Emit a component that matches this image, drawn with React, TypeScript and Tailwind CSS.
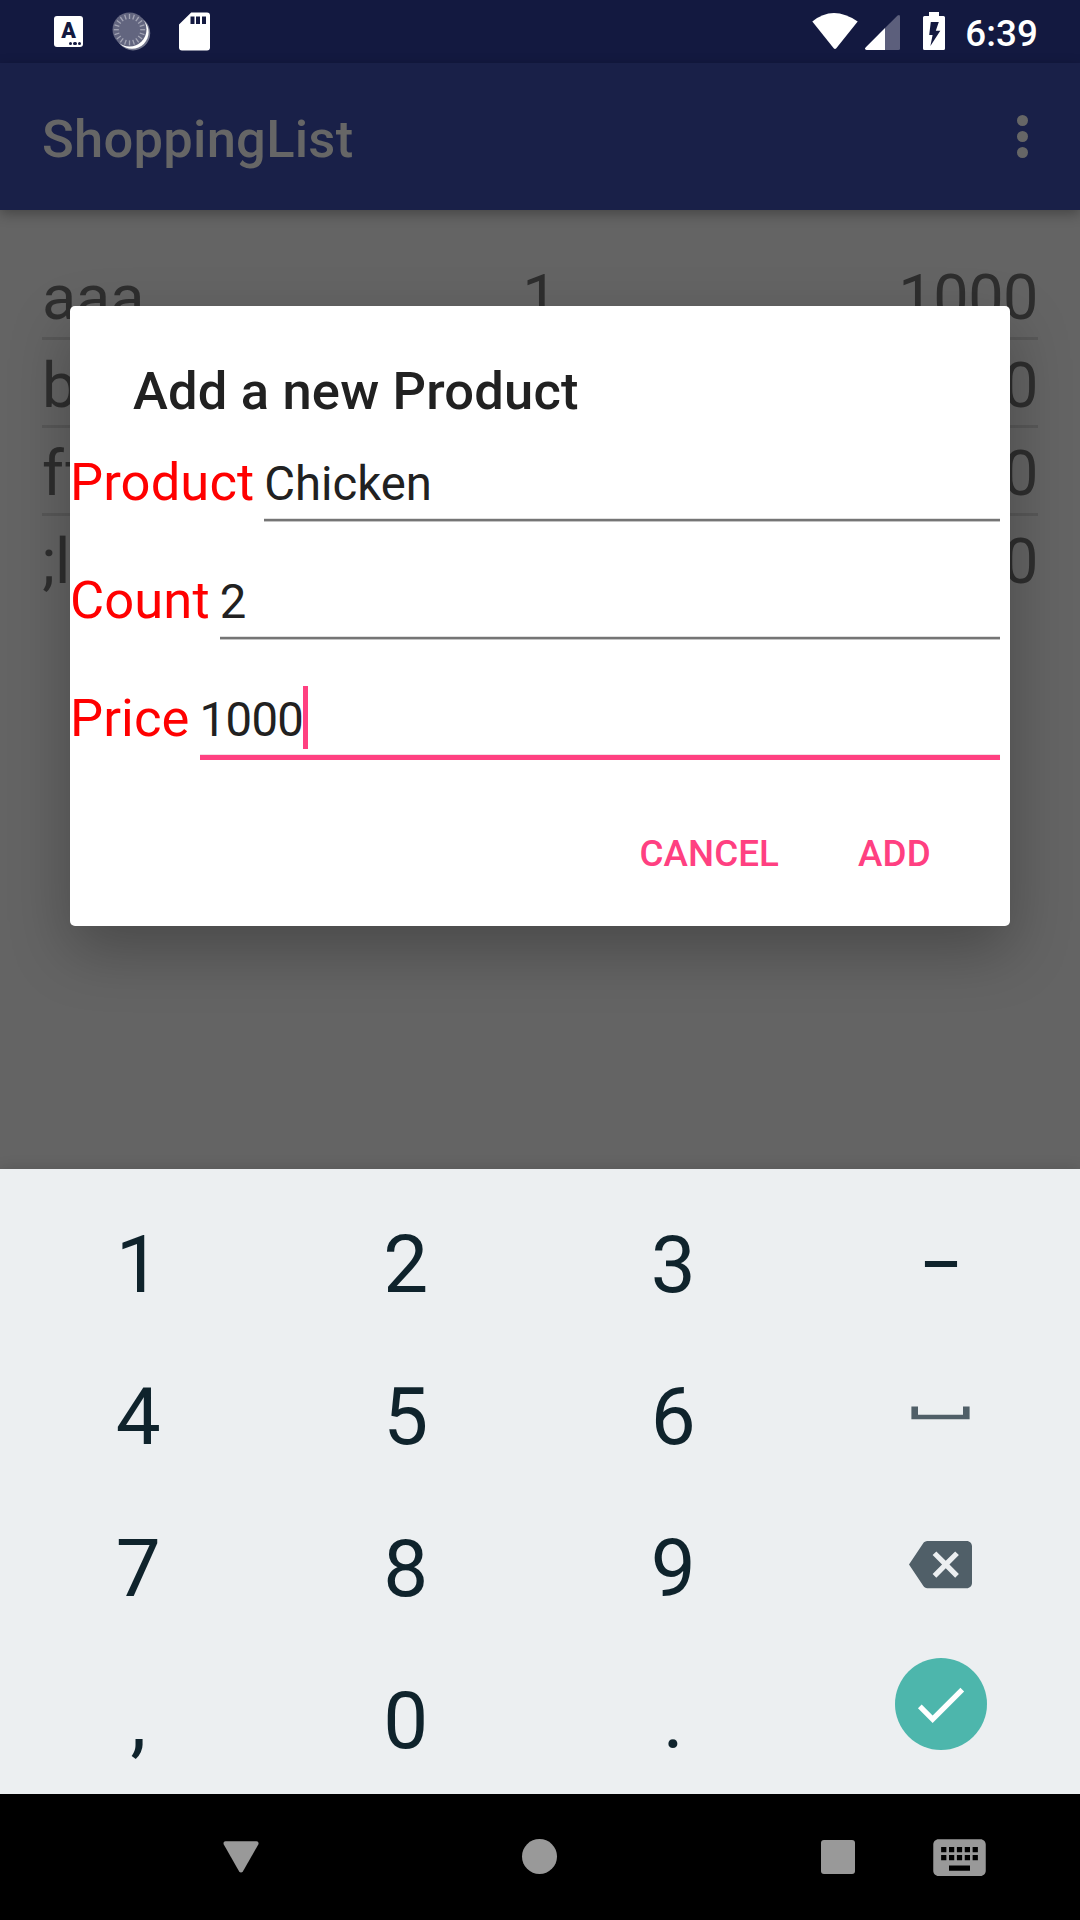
import type { ReactNode } from "react";

const rows = [
  { name: "aaa", count: "1", price: "1000" },
  { name: "b", count: "", price: "0" },
  { name: "ff", count: "", price: "0" },
  { name: ";l", count: "", price: "0" },
];

function StatusBar() {
  const ticks = Array.from({ length: 20 }, (_, i) => i * 18);
  return (
    <div className="flex h-[63px] shrink-0 items-start justify-between bg-[#131940]">
      <div className="flex">
        <div className="relative mt-4 ml-[54px] h-[31px] w-[29px] rounded-[3px] bg-white text-center text-[21.5px] leading-[30px] font-black text-[#131940]">
          A
          <div className="absolute right-[2px] bottom-[2px] flex gap-[1px]">
            <i className="size-[3.4px] rounded-full bg-[#131940]" />
            <i className="size-[3.4px] rounded-full bg-[#131940]" />
            <i className="size-[3.4px] rounded-full bg-[#131940]" />
          </div>
        </div>
        <svg className="mt-[10px] ml-[27px]" width="42" height="42" viewBox="110 10 42 42">
          <circle cx="133" cy="33.2" r="17.2" fill="#fff" opacity=".4" />
          <circle cx="132" cy="32.2" r="16.6" fill="#fff" />
          <circle cx="129.5" cy="29.5" r="17" fill="#62657f" />
          {ticks.map((a) => (
            <path key={a} d="M129.5 14v5" stroke="#a3a5b5" strokeWidth="1.3" transform={`rotate(${a} 129.5 29.7)`} />
          ))}
        </svg>
        <svg className="mt-[12px] ml-[27px]" width="31" height="39" viewBox="0 0 31 39">
          <path
            fill="#fff"
            fillRule="evenodd"
            d="M12.2.5H28a3 3 0 0 1 3 3V35.500a3 3 0 0 1-3 3H3a3 3 0 0 1-3-3V12.500zM11.500 4.500v7.500h4v-7.500zM17 4.500v7.500h4v-7.500zM23 4.500v7.500h4v-7.500z"
          />
        </svg>
      </div>
      <div className="flex text-white">
        <svg className="mt-3" width="46" height="38" viewBox="812 12 46 38">
          <path fill="#fff" d="M812.300 21.500Q833 4.500 857.700 21.500L836.300 48.300Q835 49.800 833.700 48.300z" />
        </svg>
        <svg className="mt-[14px] ml-[7px]" width="35" height="36" viewBox="865 14 35 36">
          <path fill="#5c5f7c" d="M897.600 15.500Q900 14 900 16.500V48.500Q900 50 898.500 50H885V28z" />
          <path fill="#fff" d="M885 28V50H866.500Q864 49.500 865.600 47.500z" />
        </svg>
        <svg className="mt-3 ml-[23px]" width="22" height="38" viewBox="923 12 22 38">
          <path
            fill="#fff"
            fillRule="evenodd"
            d="M929 12h10v4h4.500a1.500 1.500 0 0 1 1.500 1.500v31a1.500 1.500 0 0 1-1.500 1.500h-19a1.500 1.500 0 0 1-1.500-1.500v-31a1.500 1.500 0 0 1 1.500-1.500h4.500zM930.800 22L929.200 35h3.400L930.400 46 940.300 30.700h-4.500L938.800 22z"
          />
        </svg>
        <div className="mt-[12px] mr-[42px] ml-[20px] w-[73px] text-right text-[36.75px] leading-[43px] font-medium tracking-[0.1px]">
          6:39
        </div>
      </div>
    </div>
  );
}

function AppBar() {
  return (
    <div className="relative flex h-[147px] shrink-0 items-center justify-between bg-[#192048] pr-[52px] pl-[42px] shadow-[0_4px_12px_rgba(0,0,0,0.3)]">
      <div className="pt-[5px] text-[52.5px] leading-[62px] font-medium tracking-[0.25px] text-[#666]">ShoppingList</div>
      <div className="flex flex-col gap-[4.800px]">
        <i className="size-[11px] rounded-full bg-[#666]" />
        <i className="size-[11px] rounded-full bg-[#666]" />
        <i className="size-[11px] rounded-full bg-[#666]" />
      </div>
    </div>
  );
}

function ProductList() {
  return (
    <div className="flex-1 px-[42px] pt-[42px] text-[63px] text-[#2e2e2e]">
      {rows.map((r, i) => (
        <div
          key={r.name}
          className={
            i < rows.length - 1
              ? "grid grid-cols-3 border-b-3 border-[#585858] pt-[6px] leading-[79px]"
              : "grid grid-cols-3 pt-[6px] leading-[79px]"
          }
        >
          <span className="tracking-[-0.2px]">{r.name}</span>
          <span className="text-center">{r.count}</span>
          <span className="text-right tracking-[-0.5px]">{r.price}</span>
        </div>
      ))}
    </div>
  );
}

function Field({ label, value, focused }: { label: string; value: string; focused?: boolean }) {
  return (
    <div className="flex h-[118px] pr-[10px]">
      <label className="pt-[10px] text-[52.5px] leading-[62px] tracking-[0.1px] text-[#f00]">{label}</label>
      <div className="relative ml-[10px] h-[82px] flex-1 text-[47.25px] leading-[66px] text-[#212121]">
        <div className="flex">
          <span className={focused ? "pt-[10px] tracking-[-0.6px]" : "pt-[10px]"}>{value}</span>
          {focused && <i className="mt-[9px] h-[63px] w-[5px] bg-[#ff4081]" />}
        </div>
        {focused ? (
          <div className="absolute inset-x-0 top-[77px] h-[6px] border-t border-[#f3dfe5] bg-[#ff4081]" />
        ) : (
          <div className="absolute inset-x-0 top-[77px] h-[4px] border-t border-b border-t-[#e0e0e0] border-b-[#c4c4c4] bg-[#757575]" />
        )}
      </div>
    </div>
  );
}

function AddDialog() {
  return (
    <div className="absolute top-[306px] left-[70px] flex h-[620px] w-[940px] flex-col rounded-[5px] bg-white shadow-[0_24px_60px_rgba(0,0,0,0.27)]">
      <div className="mt-[54px] ml-[63px] text-[52.5px] leading-[62px] font-medium tracking-[0.18px] text-[#212121]">
        Add a new Product
      </div>
      <div className="mt-[19px] flex flex-col">
        <Field label="Product" value="Chicken" />
        <Field label="Count" value="2" />
        <Field label="Price" value="1000" focused />
      </div>
      <div className="flex justify-end gap-[79px] pt-[37px] pr-[79px] text-[36.75px] leading-[43px] font-medium text-[#ff4081]">
        <button className="tracking-[0.1px]">CANCEL</button>
        <button className="tracking-[0.2px]">ADD</button>
      </div>
    </div>
  );
}

function Key({ children }: { children: ReactNode }) {
  return <div className="flex items-center justify-center pt-[6px]">{children}</div>;
}

function IconKey({ children }: { children: ReactNode }) {
  return <div className="flex items-center justify-center pb-[3px]">{children}</div>;
}

function Keyboard() {
  return (
    <div className="relative grid h-[625px] shrink-0 grid-cols-4 grid-rows-4 bg-[#eceff1] pt-[17px] pr-[5.500px] pl-[4.500px] text-[80px] leading-[94px] text-[#0f232c] shadow-[0_0_14px_rgba(0,0,0,0.14)]">
      <Key>1</Key>
      <Key>2</Key>
      <Key>3</Key>
      <Key>
        <span className="scale-x-[0.82]">–</span>
      </Key>
      <Key>4</Key>
      <Key>5</Key>
      <Key>6</Key>
      <IconKey>
        <svg width="59" height="14" viewBox="0 0 59 14">
          <path fill="#505f68" d="M.4.400H7V8.800H52V.400h6.600V13.300H.4z" />
        </svg>
      </IconKey>
      <Key>7</Key>
      <Key>8</Key>
      <Key>9</Key>
      <IconKey>
        <svg width="63" height="63" viewBox="0 0 24 24" fill="#505f68">
          <path d="M22 3H7c-.69 0-1.230.350-1.590.880L0 12l5.410 8.110c.360.530.900.890 1.590.890h15c1.100 0 2-.9 2-2V5c0-1.100-.9-2-2-2zm-3 12.590L17.590 17 14 13.410 10.410 17 9 15.590 12.590 12 9 8.410 10.410 7 14 10.590 17.590 7 19 8.410 15.410 12 19 15.590z" />
        </svg>
      </IconKey>
      <Key>,</Key>
      <Key>0</Key>
      <Key>.</Key>
      <div className="flex justify-center pt-[16px]">
        <div className="flex size-[92px] items-center justify-center rounded-full bg-[#4db6ac] pr-[1px]">
          <svg width="63" height="63" viewBox="0 0 24 24" fill="#fff">
            <path d="M9 16.170L4.830 12l-1.420 1.410L9 19 21 7l-1.410-1.410z" />
          </svg>
        </div>
      </div>
    </div>
  );
}

function NavBar() {
  return (
    <div className="relative flex h-[126px] shrink-0 items-center bg-black">
      <svg className="ml-[223px]" width="36" height="32" viewBox="0 0 36 32">
        <path fill="#999" d="M2.500.3H33.500Q36.300.6 35.300 3.500L20 30.200Q18 32.800 16 30.200L.8 3.500Q-.3.6 2.500.3z" />
      </svg>
      <div className="mb-[2px] ml-[263px] size-[35px] rounded-full bg-[#999]" />
      <div className="ml-[264px] size-[34px] rounded-[3px] bg-[#999]" />
      <svg className="ml-[73px]" width="63" height="63" viewBox="0 0 24 24" fill="#999">
        <path d="M20 5H4c-1.100 0-1.990.9-1.990 2L2 17c0 1.100.9 2 2 2h16c1.100 0 2-.9 2-2V7c0-1.100-.9-2-2-2zm-9 3h2v2h-2V8zm0 3h2v2h-2v-2zM8 8h2v2H8V8zm0 3h2v2H8v-2zm-1 2H5v-2h2v2zm0-3H5V8h2v2zm9 7H8v-2h8v2zm0-4h-2v-2h2v2zm0-3h-2V8h2v2zm3 3h-2v-2h2v2zm0-3h-2V8h2v2z" />
      </svg>
    </div>
  );
}

export default function App() {
  return (
    <div className="relative flex h-[1920px] w-[1080px] flex-col overflow-hidden bg-[#646464] font-['Roboto',sans-serif]">
      <StatusBar />
      <AppBar />
      <ProductList />
      <AddDialog />
      <Keyboard />
      <NavBar />
    </div>
  );
}
